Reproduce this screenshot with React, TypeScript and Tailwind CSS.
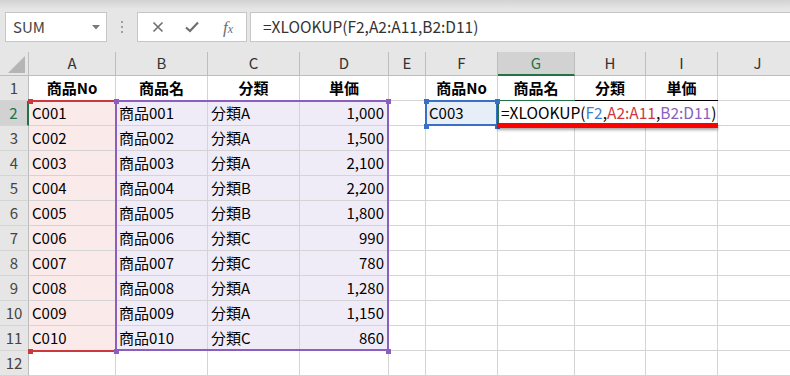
import React from "react";

const cols = [
  { k: "A", w: 87 },
  { k: "B", w: 92 },
  { k: "C", w: 92 },
  { k: "D", w: 89 },
  { k: "E", w: 37 },
  { k: "F", w: 72 },
  { k: "G", w: 77 },
  { k: "H", w: 71 },
  { k: "I", w: 72 },
  { k: "J", w: 80 },
];

const items = [
  ["C001", "商品001", "分類A", "1,000"],
  ["C002", "商品002", "分類A", "1,500"],
  ["C003", "商品003", "分類A", "2,100"],
  ["C004", "商品004", "分類B", "2,200"],
  ["C005", "商品005", "分類B", "1,800"],
  ["C006", "商品006", "分類C", "990"],
  ["C007", "商品007", "分類C", "780"],
  ["C008", "商品008", "分類A", "1,280"],
  ["C009", "商品009", "分類A", "1,150"],
  ["C010", "商品010", "分類C", "860"],
];

const header = ["商品No", "商品名", "分類", "単価", "", "商品No", "商品名", "分類", "単価", ""];

function Toolbar() {
  return (
    <div className="flex h-[52px] items-start bg-[linear-gradient(to_bottom,#d2d2d2,#e6e6e6_9px)] pt-[12px]">
      {/* name box */}
      <div className="ml-[5px] flex h-[30px] w-[102px] items-center justify-between border border-[#c6c6c6] bg-white pl-[7px] pr-[6px]">
        <span className="text-[15px] text-[#444]">SUM</span>
        <svg width="8" height="5" viewBox="0 0 8 5">
          <polygon points="0,0 8,0 4,4.5" fill="#7a7a7a" />
        </svg>
      </div>
      <div className="flex h-[30px] w-[30px] flex-col items-center justify-center gap-[3px]">
        <span className="h-[2px] w-[2px] bg-[#a0a0a0]" />
        <span className="h-[2px] w-[2px] bg-[#a0a0a0]" />
        <span className="h-[2px] w-[2px] bg-[#a0a0a0]" />
      </div>
      {/* buttons */}
      <div className="flex h-[30px] w-[110px] items-center border border-[#c6c6c6] bg-white">
        <div className="flex w-[36px] justify-center pl-[3px]">
          <svg width="12" height="12" viewBox="0 0 12 12">
            <path d="M1.5 1.5 L10.5 10.5 M10.5 1.5 L1.5 10.5" stroke="#6f6f6f" strokeWidth="1.6" />
          </svg>
        </div>
        <div className="flex w-[36px] justify-center">
          <svg width="14" height="12" viewBox="0 0 14 12">
            <path d="M1 6.5 L5 10 L13 1.5" stroke="#6f6f6f" strokeWidth="2.2" fill="none" />
          </svg>
        </div>
        <div className="flex w-[36px] items-baseline justify-center font-['Liberation_Serif',serif] text-[17px] italic leading-none text-[#6f6f6f]">
          f<span className="text-[12px]">x</span>
        </div>
      </div>
      {/* formula input */}
      <div className="ml-[3px] mr-[-4px] flex h-[30px] flex-1 items-center border border-[#c6c6c6] bg-white pl-[12px] text-[15.5px] text-[#333]">
        =XLOOKUP(F2,A2:A11,B2:D11)
      </div>
    </div>
  );
}

function ColumnHeaders() {
  return (
    <div className="flex h-[24px]">
      <div className="relative w-[29px] shrink-0 border-b border-r border-[#bdbdbd] bg-[#e6e6e6]">
        <svg className="absolute bottom-[2px] right-[3px]" width="17" height="17" viewBox="0 0 17 17">
          <polygon points="17,0 17,17 0,17" fill="#b5b5b5" />
        </svg>
      </div>
      {cols.map((c) => (
        <div
          key={c.k}
          style={{ width: c.w }}
          className={
            c.k === "G"
              ? "flex shrink-0 items-center justify-center border-b-2 border-r border-b-[#217346] border-r-[#bdbdbd] bg-[#d2d2d2] text-[15px] text-[#217346]"
              : "flex shrink-0 items-center justify-center border-b border-r border-[#bdbdbd] bg-[#e6e6e6] text-[15px] text-[#333]"
          }
        >
          {c.k}
        </div>
      ))}
    </div>
  );
}

function cellBg(row: number, col: number) {
  if (row >= 2 && row <= 11) {
    if (col === 0) return "bg-[#fbeaea]";
    if (col >= 1 && col <= 3) return "bg-[#f0ecf7]";
  }
  if (row === 2 && col === 5) return "bg-[#e8eef8]";
  return "bg-white";
}

function Row({ r }: { r: number }) {
  const data = r >= 2 && r <= 11 ? items[r - 2] : null;
  return (
    <div className="flex h-[25px]">
      <div
        className={
          r === 2
            ? "flex w-[29px] shrink-0 items-center justify-center border-b border-r-2 border-b-[#d4d4d4] border-r-[#217346] bg-[#d2d2d2] text-[15px] text-[#217346]"
            : "flex w-[29px] shrink-0 items-center justify-center border-b border-r border-b-[#d4d4d4] border-r-[#bdbdbd] bg-[#e6e6e6] text-[15px] text-[#444]"
        }
      >
        {r}
      </div>
      {cols.map((c, i) => {
        let text: React.ReactNode = "";
        let align = "justify-start pl-[3px]";
        let weight = "";
        if (r === 1) {
          text = header[i];
          align = "justify-center";
          weight = "font-bold";
        } else if (data && i <= 3) {
          text = data[i];
          if (i === 3) align = "justify-end pr-[4px]";
        } else if (r === 2 && i === 5) {
          text = "C003";
        } else if (r === 2 && i === 6) {
          // edited formula overflows into H2:I2
          text = (
            <span className="relative z-10 whitespace-nowrap text-[15.5px]">
              =XLOOKUP(<span className="text-[#3d7fd6]">F2</span>,
              <span className="text-[#d0383d]">A2:A11</span>,
              <span className="text-[#8b5fc0]">B2:D11</span>)
            </span>
          );
        }
        const noRight = r === 2 && (i === 6 || i === 7);
        return (
          <div
            key={c.k}
            style={{ width: c.w }}
            className={`flex shrink-0 items-center overflow-visible whitespace-nowrap border-b border-[#d4d4d4] text-[15px] text-black ${
              noRight ? "" : "border-r"
            } ${align} ${weight} ${cellBg(r, i)}`}
          >
            {text}
          </div>
        );
      })}
    </div>
  );
}

function Handle({ x, y, color }: { x: number; y: number; color: string }) {
  return (
    <div
      className="absolute z-20 h-[5px] w-[5px]"
      style={{ left: x - 2, top: y - 2, backgroundColor: color }}
    />
  );
}

export default function App() {
  const rows = Array.from({ length: 12 }, (_, i) => i + 1);
  // page y of the grid container is 52
  const oy = 52;
  return (
    <div className="h-[376px] w-[790px] overflow-hidden bg-white font-['Noto_Sans_CJK_JP',sans-serif]">
      <Toolbar />
      <div className="relative">
        <ColumnHeaders />
        {rows.map((r) => (
          <Row key={r} r={r} />
        ))}

        {/* A2:A11 range (red) */}
        <div className="absolute left-[29px] top-[48px] h-[2px] w-[87px] bg-[#c9393d]" />
        <div className="absolute left-[29px] top-[298px] h-[2px] w-[87px] bg-[#c9393d]" />
        <Handle x={30} y={101 - oy} color="#c9393d" />
        <Handle x={30} y={351 - oy} color="#c9393d" />

        {/* B2:D11 range (purple) */}
        <div className="absolute left-[115px] top-[48px] h-[251px] w-[274px] border-2 border-[#8b5fc0]" />
        <Handle x={116} y={101 - oy} color="#8b5fc0" />
        <Handle x={388} y={101 - oy} color="#8b5fc0" />
        <Handle x={116} y={351 - oy} color="#8b5fc0" />
        <Handle x={388} y={351 - oy} color="#8b5fc0" />

        {/* F2 (blue) */}
        <div className="absolute left-[425px] top-[48px] h-[26px] w-[73px] border-2 border-[#3a6fc6]" />

        {/* active cell G2 markers */}
        <div className="absolute left-[497px] top-[49px] z-10 h-[25px] w-[2px] bg-[#217346]" />
        <div className="absolute left-[498px] top-[48px] h-[1px] w-[77px] bg-[#217346]" />
        <div className="absolute left-[575px] top-[48px] h-[1px] w-[143px] bg-black" />

        <Handle x={426} y={101 - oy} color="#3a6fc6" />
        <Handle x={497} y={101 - oy} color="#3a6fc6" />
        <Handle x={426} y={126 - oy} color="#3a6fc6" />
        <Handle x={497} y={126 - oy} color="#3a6fc6" />

        {/* red annotation underline */}
        <div className="absolute left-[497px] top-[71px] z-30 h-[5px] w-[221px] bg-[#ff0000] shadow-[0_2px_3px_rgba(0,0,0,0.35)]" />
      </div>
    </div>
  );
}
